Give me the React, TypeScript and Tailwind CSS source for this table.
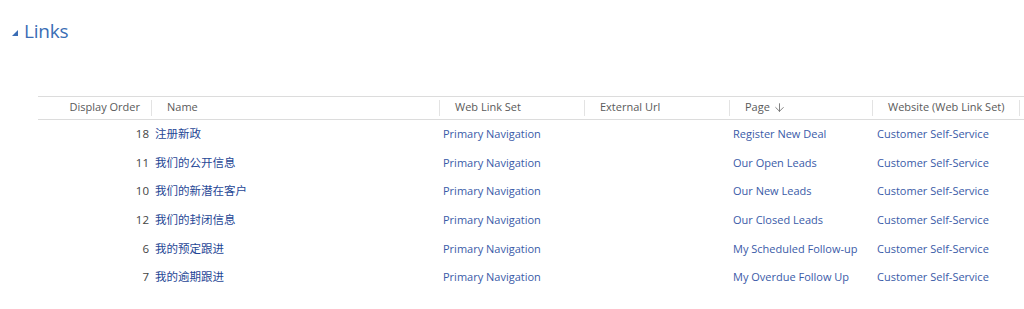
import { ArrowDown } from 'lucide-react'

type Row = {
  order: number
  name: string
  set: string
  url: string
  page: string
  site: string
}

const ROWS: Row[] = [
  { order: 18, name: '注册新政', set: 'Primary Navigation', url: '', page: 'Register New Deal', site: 'Customer Self-Service' },
  { order: 11, name: '我们的公开信息', set: 'Primary Navigation', url: '', page: 'Our Open Leads', site: 'Customer Self-Service' },
  { order: 10, name: '我们的新潜在客户', set: 'Primary Navigation', url: '', page: 'Our New Leads', site: 'Customer Self-Service' },
  { order: 12, name: '我们的封闭信息', set: 'Primary Navigation', url: '', page: 'Our Closed Leads', site: 'Customer Self-Service' },
  { order: 6, name: '我的预定跟进', set: 'Primary Navigation', url: '', page: 'My Scheduled Follow-up', site: 'Customer Self-Service' },
  { order: 7, name: '我的逾期跟进', set: 'Primary Navigation', url: '', page: 'My Overdue Follow Up', site: 'Customer Self-Service' },
]

const GRID = 'grid grid-cols-[114px_288px_145px_145px_143px_147px]'
const SEP =
  "relative after:content-[''] after:absolute after:right-0 after:top-[3px] after:h-[16px] after:w-px after:bg-[#e3e3e3]"

function HeaderCell({ children, right }: { children: React.ReactNode; right?: boolean }) {
  return (
    <div
      className={`${SEP} flex items-center h-full pb-[3px] ${right ? 'justify-end pr-[12px]' : 'pl-[15px]'}`}
    >
      {children}
    </div>
  )
}

export default function App() {
  return (
    <div
      className="w-[1024px] h-[309px] bg-white overflow-hidden text-[11px] text-[#555]"
      style={{ fontFamily: '"Open Sans", "Noto Sans CJK SC", sans-serif' }}
    >
      <div className="flex items-center pl-[12px] pt-[19px] h-[44px]">
        <svg width="6" height="6" viewBox="0 0 6 6" className="mt-[2px] mr-[6px]">
          <polygon points="6,0 6,6 0,6" fill="#3a6db5" />
        </svg>
        <span className="text-[19px] leading-none text-[#3a6db5] tracking-[-0.2px]">Links</span>
      </div>

      <div className="ml-[38px] mt-[52px] w-[986px]">
        <div className={`${GRID} h-[24px] border-y border-[#dcdcdc] text-[#5a5a5a] leading-none`}>
          <HeaderCell right>Display Order</HeaderCell>
          <HeaderCell>Name</HeaderCell>
          <HeaderCell>Web Link Set</HeaderCell>
          <HeaderCell>External Url</HeaderCell>
          <HeaderCell>
            Page
            <ArrowDown size={13} strokeWidth={1.4} className="ml-[3px] mt-[1px]" />
          </HeaderCell>
          <HeaderCell>Website (Web Link Set)</HeaderCell>
        </div>

        {ROWS.map(r => (
          <div key={r.order} className={`${GRID} h-[28.7px] pt-[6px] items-baseline leading-[16px]`}>
            <div className="text-right pr-[3px] text-[#444] text-[11.5px]">{r.order}</div>
            <div className="pl-[3px] text-[#1f4796] text-[11.5px]">{r.name}</div>
            <div className="pl-[3px] text-[#3a5ba8]">{r.set}</div>
            <div className="pl-[3px] text-[#3a5ba8]">{r.url}</div>
            <div className="pl-[3px] text-[#3a5ba8] whitespace-nowrap">{r.page}</div>
            <div className="pl-[4px] text-[#3a5ba8] whitespace-nowrap">{r.site}</div>
          </div>
        ))}
      </div>
    </div>
  )
}
